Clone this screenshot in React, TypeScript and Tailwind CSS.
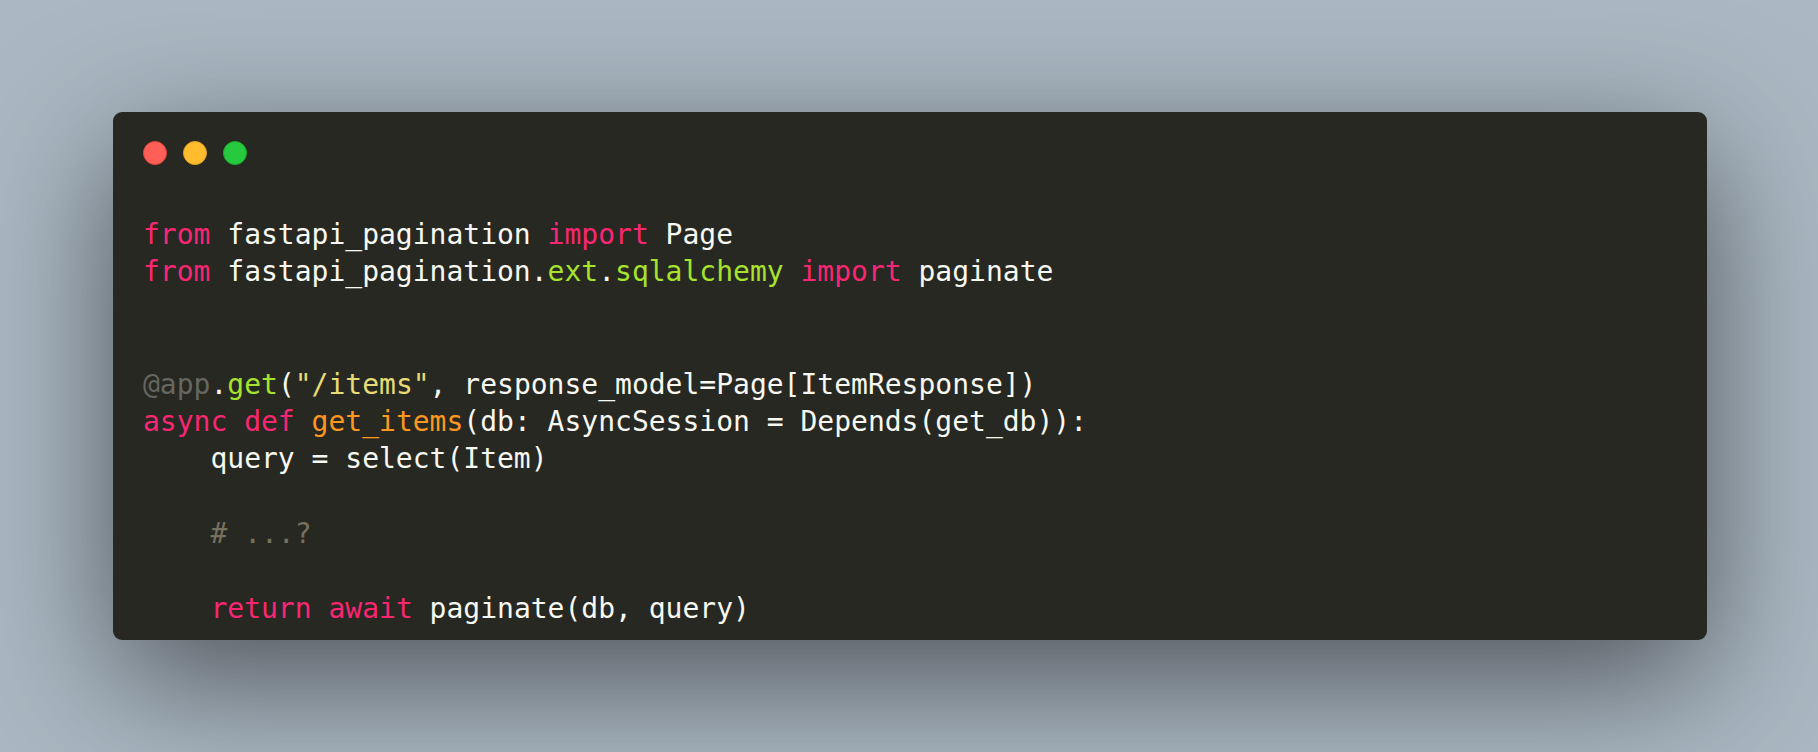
import React from "react";

const K = ({ children }: { children: React.ReactNode }) => <span className="text-[#f92672]">{children}</span>;
const G = ({ children }: { children: React.ReactNode }) => <span className="text-[#a6e22e]">{children}</span>;
const Y = ({ children }: { children: React.ReactNode }) => <span className="text-[#e6db74]">{children}</span>;
const O = ({ children }: { children: React.ReactNode }) => <span className="text-[#fd971f]">{children}</span>;
const C = ({ children }: { children: React.ReactNode }) => <span className="text-[#75715e]">{children}</span>;
const D = ({ children }: { children: React.ReactNode }) => <span className="text-[#666660]">{children}</span>;

const Line = ({ children }: { children?: React.ReactNode }) => (
  <div className="h-[37.4px] whitespace-pre">{children ?? " "}</div>
);

export default function App() {
  return (
    <div className="w-[1818px] h-[752px] bg-[#abb8c3] pt-[112px] pl-[113px] pr-[111px]">
      <div className="w-full rounded-[9px] bg-[#272822] shadow-[0_40px_136px_rgba(0,0,0,0.55)] pt-[29px] pb-[13px]">
        <div className="flex gap-4 pl-[30px]">
          <div className="w-6 h-6 rounded-full bg-[#ff5f56] border border-[#e0443e]" />
          <div className="w-6 h-6 rounded-full bg-[#ffbd2e] border border-[#dea123]" />
          <div className="w-6 h-6 rounded-full bg-[#27c93f] border border-[#1aab29]" />
        </div>
        <div
          className="mt-[51px] pl-[30px] text-[28px] leading-[37.4px] text-[#f8f8f2]"
          style={{ fontFamily: '"DejaVu Sans Mono", "Liberation Mono", monospace' }}
        >
          <Line><K>from</K> fastapi_pagination <K>import</K> Page</Line>
          <Line><K>from</K> fastapi_pagination.<G>ext</G>.<G>sqlalchemy</G> <K>import</K> paginate</Line>
          <Line />
          <Line />
          <Line><D>@app</D>.<G>get</G>(<Y>"/items"</Y>, response_model=Page[ItemResponse])</Line>
          <Line><K>async</K> <K>def</K> <O>get_items</O>(db: AsyncSession = Depends(get_db)):</Line>
          <Line>    query = select(Item)</Line>
          <Line />
          <Line>    <C># ...?</C></Line>
          <Line />
          <Line>    <K>return</K> <K>await</K> paginate(db, query)</Line>
        </div>
      </div>
    </div>
  );
}
